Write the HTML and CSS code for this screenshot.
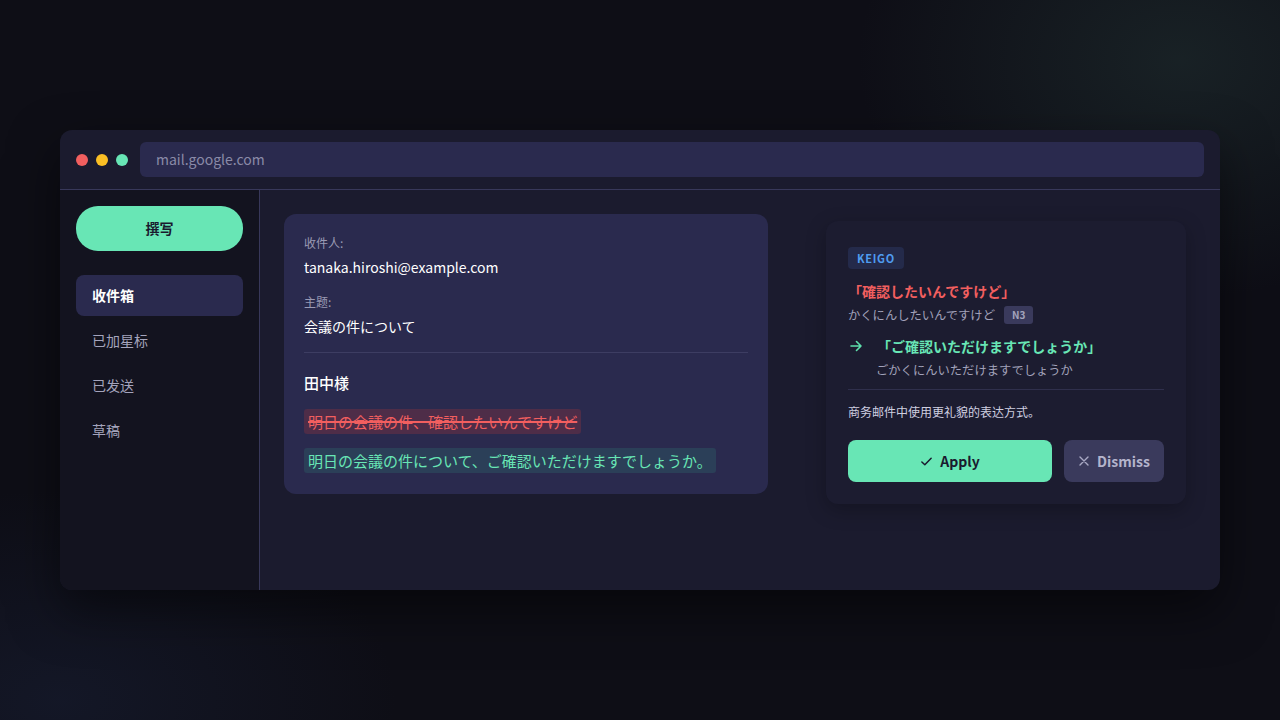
FILE: index.html
```html
<!DOCTYPE html>
<html lang="ja">
<head>
  <meta charset="UTF-8">
  <meta name="viewport" content="width=device-width, initial-scale=1.0">
  <title>Keigo Assistant</title>
  <link rel="stylesheet" href="styles.css">
</head>
<body>
  <div class="window">
    <div class="titlebar">
      <div class="dots">
        <span class="dot red"></span>
        <span class="dot yellow"></span>
        <span class="dot green"></span>
      </div>
      <div class="urlbar">mail.google.com</div>
    </div>

    <div class="app">
      <div class="sidebar" lang="zh-CN">
        <button class="compose">撰写</button>
        <div class="nav-item active">收件箱</div>
        <div class="nav-item">已加星标</div>
        <div class="nav-item">已发送</div>
        <div class="nav-item">草稿</div>
      </div>

      <div class="main">
        <div class="mail-card">
          <div class="field-label" lang="zh-CN">收件人:</div>
          <div class="field-value">tanaka.hiroshi@example.com</div>
          <div class="field-label" lang="zh-CN">主题:</div>
          <div class="field-value">会議の件について</div>
          <div class="divider"></div>
          <div class="greeting">田中様</div>
          <div class="line"><span class="hl bad">明日の会議の件、確認したいんですけど</span></div>
          <div class="line"><span class="hl good">明日の会議の件について、ご確認いただけますでしょうか。</span></div>
        </div>

        <div class="panel">
          <div class="badge">KEIGO</div>
          <div class="orig">「確認したいんですけど」</div>
          <div class="reading">かくにんしたいんですけど<span class="level">N3</span></div>
          <div class="suggest">
            <svg class="arrow" width="14" height="14" viewBox="0 0 14 14" fill="none" stroke="#5ee0ac" stroke-width="1.6" stroke-linecap="round" stroke-linejoin="round">
              <path d="M2 7h10M7.5 2.5L12 7l-4.5 4.5"/>
            </svg>
            <span>「ご確認いただけますでしょうか」</span>
          </div>
          <div class="reading indent">ごかくにんいただけますでしょうか</div>
          <div class="divider thin"></div>
          <div class="note" lang="zh-CN">商务邮件中使用更礼貌的表达方式。</div>
          <div class="actions">
            <button class="btn apply">
              <svg width="13" height="13" viewBox="0 0 14 14" fill="none" stroke="#1a1a2e" stroke-width="1.6" stroke-linecap="round" stroke-linejoin="round"><path d="M2 7.5l3.2 3L12 3.5"/></svg>
              Apply
            </button>
            <button class="btn dismiss">
              <svg width="12" height="12" viewBox="0 0 12 12" fill="none" stroke="#a9a9c4" stroke-width="1.4" stroke-linecap="round"><path d="M2 2l8 8M10 2l-8 8"/></svg>
              Dismiss
            </button>
          </div>
        </div>
      </div>
    </div>
  </div>
</body>
</html>
```

FILE: styles.css
```css
* {
  box-sizing: border-box;
}

body {
  margin: 0;
  height: 720px;
  font-family: "Noto Sans CJK JP", "Noto Sans CJK SC", sans-serif;
  background-color: #0e0e16;
  background-image:
    radial-gradient(ellipse 460px 340px at 1180px 60px, rgba(40, 62, 60, 0.4), transparent 70%),
    radial-gradient(ellipse 480px 300px at 60px 700px, rgba(30, 40, 70, 0.35), transparent 70%);
  display: flex;
  justify-content: center;
  padding-top: 130px;
}

.window {
  width: 1160px;
  height: 460px;
  border-radius: 12px;
  overflow: hidden;
  background: #1b1b2e;
  box-shadow: 0 20px 50px rgba(0, 0, 0, 0.5);
  display: flex;
  flex-direction: column;
}

.titlebar {
  height: 60px;
  flex-shrink: 0;
  display: flex;
  align-items: center;
  padding: 0 16px;
  gap: 12px;
  border-bottom: 1px solid #38385a;
}

.dots {
  display: flex;
  gap: 8px;
}

.dot {
  width: 12px;
  height: 12px;
  border-radius: 50%;
}

.dot.red { background: #f25f5f; }
.dot.yellow { background: #fbbf24; }
.dot.green { background: #68e6b5; }

.urlbar {
  flex: 1;
  height: 35px;
  border-radius: 6px;
  background: #2a2a4e;
  color: #8a8aa8;
  font-size: 14px;
  line-height: 35px;
  padding-left: 16px;
}

.app {
  flex: 1;
  display: flex;
}

.sidebar {
  width: 200px;
  background: #13131f;
  border-right: 1px solid #38385a;
  padding: 16px;
  display: flex;
  flex-direction: column;
  gap: 4px;
}

.compose {
  height: 45px;
  border: none;
  border-radius: 22px;
  background: #68e6b5;
  color: #1a1a2e;
  font-family: inherit;
  font-size: 14px;
  font-weight: 700;
  line-height: 43px;
  margin-bottom: 20px;
}

.nav-item {
  height: 41px;
  line-height: 41px;
  padding-left: 16px;
  border-radius: 8px;
  color: #a4a4bc;
  font-size: 14px;
}

.nav-item.active {
  background: #2a2a4e;
  color: #ffffff;
  font-weight: 700;
}

.main {
  flex: 1;
  display: flex;
  align-items: flex-start;
  padding: 24px 34px 0 24px;
  gap: 58px;
}

.mail-card {
  width: 484px;
  background: #2a2a4e;
  border-radius: 12px;
  padding: 20px 20px 21px;
}

.field-label {
  color: #9a9ab4;
  font-size: 12px;
  line-height: 18px;
  margin-bottom: 4px;
}

.field-value {
  color: #ffffff;
  font-size: 14px;
  line-height: 22px;
  margin-bottom: 15px;
}

.divider {
  height: 1px;
  background: #3d3d62;
  margin: 1px 0 19px;
}

.greeting {
  color: #ffffff;
  font-size: 15px;
  font-weight: 500;
  line-height: 22px;
  margin-bottom: 15px;
}

.line {
  margin-bottom: 14px;
  line-height: 25px;
}

.line:last-child {
  margin-bottom: 0;
}

.hl {
  display: inline-block;
  padding: 0 4px;
  border-radius: 3px;
  font-size: 15px;
  line-height: 25px;
}

.hl.bad {
  background: #4e2d48;
  color: #f25f5f;
  text-decoration: line-through;
  text-decoration-thickness: 1.5px;
}

.hl.good {
  background: #2b3f58;
  color: #68e6b5;
}

.panel {
  width: 360px;
  margin-top: 7px;
  background: #1c1c30;
  border-radius: 12px;
  padding: 26px 22px 22px;
  box-shadow: 0 6px 20px rgba(0, 0, 0, 0.25);
}

.badge {
  width: fit-content;
  height: 22px;
  line-height: 22px;
  padding: 0 9px;
  border-radius: 4px;
  background: #242a4a;
  color: #4f9cf0;
  font-size: 11px;
  font-weight: 700;
  letter-spacing: 0.7px;
}

.orig {
  color: #f25f5f;
  font-size: 14px;
  font-weight: 700;
  line-height: 22px;
  margin-top: 11px;
}

.reading {
  color: #a2a2ba;
  font-size: 12.3px;
  line-height: 20px;
  margin-top: 3px;
  display: flex;
  align-items: center;
  gap: 9px;
}

.reading.indent {
  padding-left: 28px;
  margin-top: 3px;
}

.level {
  display: inline-block;
  height: 18px;
  line-height: 18px;
  padding: 0 8px;
  border-radius: 3px;
  background: #3a3a5c;
  color: #a4a4bc;
  font-size: 10px;
  font-weight: 700;
}

.suggest {
  display: flex;
  align-items: center;
  gap: 14px;
  margin-top: 10px;
  color: #68e6b5;
  font-size: 14px;
  font-weight: 700;
  line-height: 22px;
}

.arrow {
  margin-left: 1px;
  flex-shrink: 0;
}

.divider.thin {
  background: #2f2f4c;
  margin: 9px 0 13px;
}

.note {
  color: #cfcfe0;
  font-size: 12px;
  line-height: 18px;
}

.actions {
  display: flex;
  gap: 12px;
  margin-top: 19px;
}

.btn {
  height: 42px;
  border: none;
  border-radius: 8px;
  font-family: inherit;
  font-size: 14px;
  font-weight: 700;
  display: flex;
  align-items: center;
  justify-content: center;
  gap: 7px;
}

.btn.apply {
  flex: 1;
  background: #68e6b5;
  color: #1a1a2e;
}

.btn.dismiss {
  width: 100px;
  background: #3a3a5c;
  color: #b4b4cc;
  font-weight: 600;
}
```
